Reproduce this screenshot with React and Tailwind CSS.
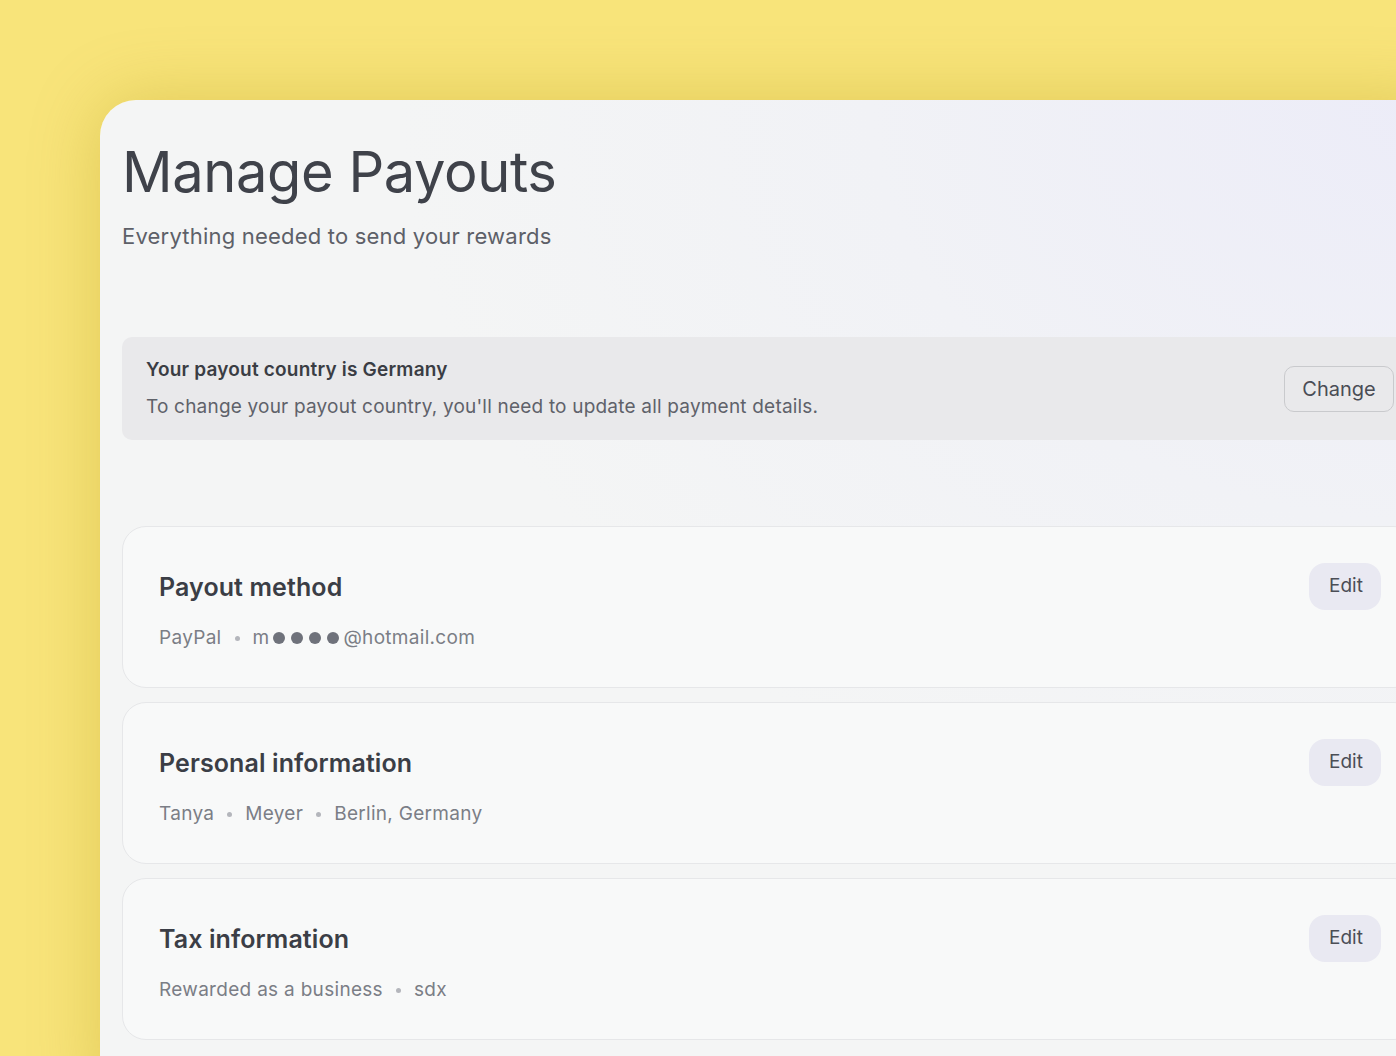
import React from "react";

const rows = [
  {
    title: "Payout method",
    parts: ["PayPal", "masked"],
  },
  {
    title: "Personal information",
    parts: ["Tanya", "Meyer", "Berlin, Germany"],
  },
  {
    title: "Tax information",
    parts: ["Rewarded as a business", "sdx"],
  },
];

function MaskedEmail() {
  return (
    <span className="inline-flex items-center">
      m
      <span className="inline-flex items-center gap-[6px] mx-[4px]">
        <span className="w-[12px] h-[12px] rounded-full bg-[#6f727b]" />
        <span className="w-[12px] h-[12px] rounded-full bg-[#6f727b]" />
        <span className="w-[12px] h-[12px] rounded-full bg-[#6f727b]" />
        <span className="w-[12px] h-[12px] rounded-full bg-[#6f727b]" />
      </span>
      @hotmail.com
    </span>
  );
}

function DetailCard({ title, parts }) {
  return (
    <div className="flex items-start justify-between rounded-[24px] border border-[#e6e7e9] bg-[#f8f9f9] pl-9 pr-9 pt-[36px] pb-[36px]">
      <div className="pt-[8px]">
        <h2 className="text-[25px] leading-[32px] font-semibold text-[#3b3e46] tracking-[0.1px]">
          {title}
        </h2>
        <div className="mt-[22px] flex items-center text-[19px] leading-[26px] text-[#7b7e86] tracking-[0.3px]">
          {parts.map((p, i) => (
            <React.Fragment key={i}>
              {i > 0 && (
                <span className="mx-[13px] w-[5px] h-[5px] rounded-full bg-[#b4b6bc]" />
              )}
              {p === "masked" ? <MaskedEmail /> : <span>{p}</span>}
            </React.Fragment>
          ))}
        </div>
      </div>
      <button className="w-[72px] h-[47px] rounded-[16px] bg-[#e9e9f2] text-[19px] text-[#4b4e56] pl-[2px]">
        Edit
      </button>
    </div>
  );
}

export default function App() {
  return (
    <div
      className="w-[1396px] h-[1056px] overflow-hidden bg-[#f8e47a] pt-[100px] pl-[100px]"
      style={{ fontFamily: "Inter, 'Noto Sans', sans-serif" }}
    >
      <div className="w-[1340px] h-[1000px] rounded-tl-[36px] bg-[radial-gradient(ellipse_at_100%_0%,#ececf8_0%,#f1f2f6_30%,#f4f5f5_55%)] shadow-[0_0_70px_rgba(170,140,0,0.3)] px-[22px] pt-[44px]">
        {/* header */}
        <h1 className="text-[56px] leading-none font-normal text-[#3f424a] tracking-[-0.4px]">
          Manage Payouts
        </h1>
        <p className="mt-[25px] text-[22px] leading-none text-[#5d6068] tracking-[0.2px]">
          Everything needed to send your rewards
        </p>

        {/* country banner */}
        <div className="mt-[90px] flex items-center justify-between rounded-[10px] bg-[#e9e9eb] px-6 py-[20px]">
          <div>
            <div className="text-[19px] leading-[26px] font-semibold text-[#3a3d44] tracking-[0.2px]">
              Your payout country is Germany
            </div>
            <div className="mt-[11px] text-[19px] leading-[26px] text-[#5f626a] tracking-[0.2px]">
              To change your payout country, you'll need to update all payment details.
            </div>
          </div>
          <button className="w-[110px] h-[46px] rounded-[10px] border border-[#c9cacd] text-[20px] text-[#4a4d55]">
            Change
          </button>
        </div>

        {/* detail cards */}
        <div className="mt-[86px] flex flex-col gap-[14px]">
          {rows.map((r) => (
            <DetailCard key={r.title} title={r.title} parts={r.parts} />
          ))}
        </div>
      </div>
    </div>
  );
}
